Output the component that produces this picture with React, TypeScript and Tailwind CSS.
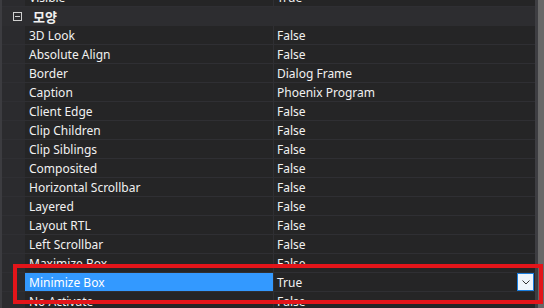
import { ReactNode } from "react";

const rows: [string, string][] = [
  ["3D Look", "False"],
  ["Absolute Align", "False"],
  ["Border", "Dialog Frame"],
  ["Caption", "Phoenix Program"],
  ["Client Edge", "False"],
  ["Clip Children", "False"],
  ["Clip Siblings", "False"],
  ["Composited", "False"],
  ["Horizontal Scrollbar", "False"],
  ["Layered", "False"],
  ["Layout RTL", "False"],
  ["Left Scrollbar", "False"],
  ["Maximize Box", "False"],
  ["Minimize Box", "True"],
  ["No Activate", "False"],
];

function Row({ name, value, selected }: { name: string; value: ReactNode; selected?: boolean }) {
  return (
    <div className="flex h-[19px] shrink-0 border-b border-[#2f2f33]">
      <div className="w-[23px] shrink-0 bg-[#2b2b2e]" />
      <div
        className={`flex w-[249px] shrink-0 items-center border-r border-[#2f2f33] pl-1 pt-px ${
          selected ? "bg-[#3399ff] text-white" : ""
        }`}
      >
        {name}
      </div>
      <div className="flex flex-1 items-center pl-[3px] pt-px">{value}</div>
    </div>
  );
}

export default function App() {
  return (
    <div
      className="relative flex h-[308px] w-[544px] overflow-hidden border-l-2 border-[#3c3c40] bg-[#252526] text-[12px] text-[#f1f1f1]"
      style={{ fontFamily: '"Noto Sans", "Noto Sans CJK KR", sans-serif' }}
    >
      <div className="-mt-[12px] flex flex-1 flex-col">
        <Row name="Visible" value="True" />
        <div className="flex h-[19px] shrink-0 items-center border-b border-[#2d2d30] bg-[#2d2d30]">
          <div className="flex w-[23px] items-center pl-[11px]">
            <div className="flex h-[9px] w-[9px] items-center justify-center border border-[#d0d0d0]">
              <div className="h-px w-[5px] bg-[#d0d0d0]" />
            </div>
          </div>
          <span
            className="pl-[8px] pt-px text-[13px] font-bold"
            style={{ fontFamily: '"Noto Sans CJK KR", sans-serif' }}
          >
            모양
          </span>
        </div>
        {rows.map(([n, v]) =>
          n === "Minimize Box" ? (
            <Row
              key={n}
              name={n}
              selected
              value={
                <div className="flex flex-1 items-center justify-between pr-[1px]">
                  <span>{v}</span>
                  <div className="-mt-px flex h-[18px] w-[17px] items-center justify-center border border-[#1a7fe0] bg-[#eef5fc]">
                    <svg width="8" height="5" viewBox="0 0 8 5">
                      <path d="M0.5 0.5 L4 4 L7.5 0.5" fill="none" stroke="#333" strokeWidth="1" />
                    </svg>
                  </div>
                </div>
              }
            />
          ) : (
            <Row key={n} name={n} value={v} />
          )
        )}
      </div>
      <div className="flex w-[9px] shrink-0 bg-[#3e3e42] pl-[3px]">
        <div className="w-[6px] bg-[#686868]" />
      </div>
      <div className="absolute left-[11px] top-[264px] h-[40px] w-[530px] border-4 border-[#e3151a]" />
    </div>
  );
}
